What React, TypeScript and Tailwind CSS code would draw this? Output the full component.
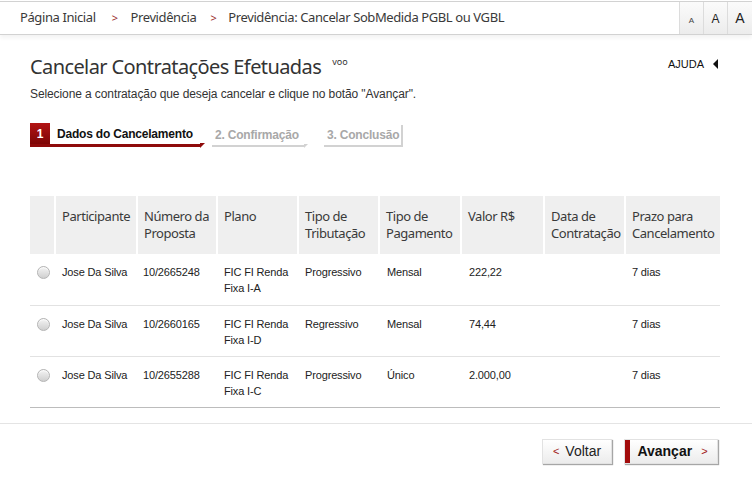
import React from "react";

const rows = [
  { nome: "Jose Da Silva", proposta: "10/2665248", plano: ["FIC FI Renda", "Fixa I-A"], trib: "Progressivo", pag: "Mensal", valor: "222,22", data: "", prazo: "7 dias" },
  { nome: "Jose Da Silva", proposta: "10/2660165", plano: ["FIC FI Renda", "Fixa I-D"], trib: "Regressivo", pag: "Mensal", valor: "74,44", data: "", prazo: "7 dias" },
  { nome: "Jose Da Silva", proposta: "10/2655288", plano: ["FIC FI Renda", "Fixa I-C"], trib: "Progressivo", pag: "Único", valor: "2.000,00", data: "", prazo: "7 dias" },
];

const headers = [
  ["Participante"],
  ["Número da", "Proposta"],
  ["Plano"],
  ["Tipo de", "Tributação"],
  ["Tipo de", "Pagamento"],
  ["Valor R$"],
  ["Data de", "Contratação"],
  ["Prazo para", "Cancelamento"],
];

const colWidths = ["w-[25px]", "w-[82px]", "w-[80px]", "w-[81px]", "w-[81px]", "w-[82px]", "w-[83px]", "w-[81px]", "w-[95px]"];

function Radio() {
  return (
    <span className="block w-[13px] h-[13px] rounded-full border border-[#b5b5b5] bg-gradient-to-b from-[#f4f4f4] to-[#cfcfcf] shadow-[inset_0_1px_1px_rgba(255,255,255,0.8)]" />
  );
}

export default function App() {
  return (
    <div className="w-[752px] min-h-[485px] bg-white text-[#333] font-['Noto_Sans',sans-serif]">
      {/* barra superior */}
      <div className="h-[34px] mt-px flex items-stretch border-y border-[#d2d2d2] bg-white shadow-[0_3px_4px_rgba(0,0,0,0.05)]">
        <nav className="flex-1 flex items-center pl-[20px] text-[13px] tracking-[-0.4px] text-[#3a3a3a]">
          <span>Página Inicial</span>
          <span className="ml-[16px] mr-[13px] text-[11px] text-[#9b2c2c]">&gt;</span>
          <span>Previdência</span>
          <span className="ml-[14px] mr-[12px] text-[11px] text-[#9b2c2c]">&gt;</span>
          <span>Previdência: Cancelar SobMedida PGBL ou VGBL</span>
        </nav>
        <div className="flex">
          <button className="w-[24px] border-l border-[#dcdcdc] bg-gradient-to-b from-[#fbfbfb] to-[#ececec] text-[8px] pt-[5px] text-[#444] font-['Liberation_Sans',sans-serif]">A</button>
          <button className="w-[24px] border-l border-[#dcdcdc] bg-gradient-to-b from-[#fbfbfb] to-[#ececec] text-[12px] pt-[2px] text-[#222] font-['Liberation_Sans',sans-serif]">A</button>
          <button className="w-[25px] border-l border-[#dcdcdc] bg-gradient-to-b from-[#fbfbfb] to-[#ececec] text-[14px] text-[#222] font-['Liberation_Sans',sans-serif]">A</button>
        </div>
      </div>

      <div className="pl-[30px] pr-[32px] pt-[18px]">
        <div className="flex justify-between items-start">
          <h1 className="flex items-start text-[20px] leading-[28px] tracking-[-0.6px] text-[#333]">
            Cancelar Contratações Efetuadas
            <span className="ml-[11px] mt-[3px] text-[9px] leading-[12px] tracking-normal">voo</span>
          </h1>
          <div className="mt-[3px] mr-[2px] flex items-center gap-[9px] text-[11px] text-[#111] font-['Liberation_Sans',sans-serif]">
            <span>AJUDA</span>
            <span className="w-0 h-0 border-y-[5px] border-y-transparent border-r-[5px] border-r-[#111]" />
          </div>
        </div>
        <p className="mt-[5px] text-[12px] leading-[16px] tracking-[-0.1px] text-[#333] font-['Liberation_Sans',sans-serif]">
          Selecione a contratação que deseja cancelar e clique no botão "Avançar".
        </p>

        {/* etapas */}
        <div className="mt-[21px] flex items-end gap-[12px] whitespace-nowrap font-['Liberation_Sans',sans-serif] font-bold text-[12px] tracking-[-0.2px]">
          <div className="relative flex items-stretch h-[24px] w-[170px] border-b-[3px] border-[#8e0a0a]">
            <span className="w-[20px] flex items-center justify-center bg-gradient-to-b from-[#b31414] to-[#7d0606] text-white text-[12px]">1</span>
            <span className="pl-[7px] flex items-center text-[#111]">Dados do Cancelamento</span>
            <span className="absolute right-[-5px] bottom-[-4px] w-0 h-0 border-t-[5px] border-t-[#8e0a0a] border-r-[5px] border-r-transparent" />
          </div>
          <div className="relative h-[22px] w-[92px] pl-[3px] flex items-center border-b-2 border-[#d2d2d2] text-[#a8a8a8]">
            2. Confirmação
            <span className="absolute right-[-4px] bottom-[-3px] w-0 h-0 border-t-[4px] border-t-[#d2d2d2] border-r-[4px] border-r-transparent" />
          </div>
          <div className="ml-[8px] h-[22px] w-[79px] pl-[3px] flex items-center border-b-2 border-r-2 border-[#d2d2d2] text-[#a8a8a8]">
            3. Conclusão
          </div>
        </div>

        {/* tabela */}
        <table className="mt-[49px] w-[690px] table-fixed border-collapse">
          <colgroup>
            {colWidths.map((w, i) => (
              <col key={i} className={w} />
            ))}
          </colgroup>
          <thead>
            <tr className="bg-[#efefef] h-[58px]">
              <th className="border-r-2 border-white" />
              {headers.map((h, i) => (
                <th
                  key={i}
                  className={`align-top text-left font-normal text-[13px] leading-[17px] tracking-[-0.45px] text-[#3a3a3a] pl-[6px] pt-[12px] ${i < headers.length - 1 ? "border-r-2 border-white" : ""}`}
                >
                  {h.map((l) => (
                    <div key={l}>{l}</div>
                  ))}
                </th>
              ))}
            </tr>
          </thead>
          <tbody className="font-['Liberation_Sans',sans-serif] text-[11px] leading-[16px] tracking-[-0.15px] text-[#222]">
            {rows.map((r, i) => (
              <tr key={i} className={`h-[51px] ${i === rows.length - 1 ? "border-b border-[#bcbcbc]" : "border-b border-[#e2e2e2]"}`}>
                <td className="align-top pt-[12px] pl-[7px]">
                  <Radio />
                </td>
                <td className="align-top pt-[10px] pl-[7px]">{r.nome}</td>
                <td className="align-top pt-[10px] pl-[6px]">{r.proposta}</td>
                <td className="align-top pt-[10px] pl-[7px]">
                  <div>{r.plano[0]}</div>
                  <div>{r.plano[1]}</div>
                </td>
                <td className="align-top pt-[10px] pl-[7px]">{r.trib}</td>
                <td className="align-top pt-[10px] pl-[8px]">{r.pag}</td>
                <td className="align-top pt-[10px] pl-[8px]">{r.valor}</td>
                <td className="align-top pt-[10px] pl-[7px]">{r.data}</td>
                <td className="align-top pt-[10px] pl-[7px]">{r.prazo}</td>
              </tr>
            ))}
          </tbody>
        </table>
      </div>

      <div className="mt-[15px] border-t border-[#e4e4e4]" />

      <div className="mt-[15px] flex justify-end gap-[12px] pr-[34px] font-['Liberation_Sans',sans-serif] text-[14px]">
        <button className="w-[70px] h-[25px] flex items-center justify-center gap-[6px] border border-[#e2e2e2] bg-gradient-to-b from-white to-[#ececec] shadow-[1px_1px_1px_rgba(0,0,0,0.35)] text-[#222]">
          <span className="text-[#a01818] text-[11px]">&lt;</span>
          Voltar
        </button>
        <button className="w-[94px] h-[25px] flex items-center border border-[#e2e2e2] bg-gradient-to-b from-white to-[#ececec] shadow-[1px_1px_1px_rgba(0,0,0,0.35)] text-[#111] font-bold">
          <span className="w-[5px] h-full bg-[#a30d0d]" />
          <span className="flex-1 flex items-center justify-center gap-[9px] pr-[2px]">
            Avançar
            <span className="text-[#a01818] text-[11px] font-normal">&gt;</span>
          </span>
        </button>
      </div>
    </div>
  );
}
